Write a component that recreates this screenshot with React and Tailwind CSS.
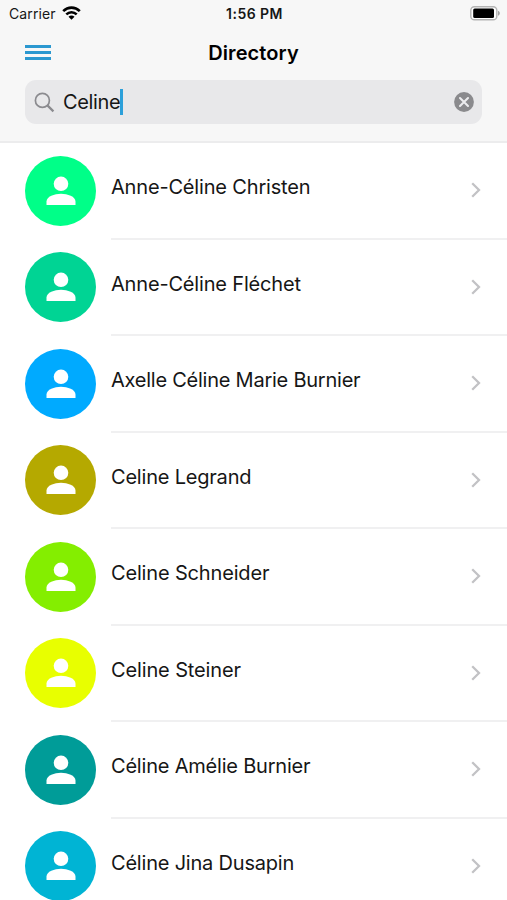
const people = [
  { name: "Anne-Céline Christen", color: "bg-[#00ff88]", tracking: "tracking-[-0.17px]" },
  { name: "Anne-Céline Fléchet", color: "bg-[#00d494]", tracking: "tracking-[-0.17px]" },
  { name: "Axelle Céline Marie Burnier", color: "bg-[#00aaff]", tracking: "tracking-[-0.24px]" },
  { name: "Celine Legrand", color: "bg-[#b5a900]", tracking: "tracking-[-0.2px]" },
  { name: "Celine Schneider", color: "bg-[#84ee00]", tracking: "tracking-[-0.16px]" },
  { name: "Celine Steiner", color: "bg-[#e8ff00]", tracking: "tracking-[-0.13px]" },
  { name: "Céline Amélie Burnier", color: "bg-[#009c98]", tracking: "tracking-[-0.2px]" },
  { name: "Céline Jina Dusapin", color: "bg-[#00b4d4]", tracking: "tracking-[-0.2px]" },
];

function WifiIcon() {
  return (
    <svg className="mb-[2px] h-[14px] w-[19px]" viewBox="0 0 19 14" fill="none" stroke="#000" strokeWidth="2.6">
      <path d="M1.2 5.2C6 .4 13 .4 17.8 5.2" />
      <path d="M4.3 8.4c3-2.9 7.4-2.9 10.4 0" />
      <path d="M9.5 13.7 6.5 10.8c1.7-1.6 4.3-1.6 6 0Z" fill="#000" stroke="none" />
    </svg>
  );
}

function BatteryIcon() {
  return (
    <svg className="h-[15px] w-[31px]" viewBox="0 0 31 15">
      <rect x="1.8" y=".7" width="26" height="13.1" rx="3.6" fill="#fff" stroke="#b4b4b4" strokeWidth="1.4" />
      <rect x="4.2" y="2.6" width="20.8" height="9.4" rx="1.5" fill="#000" />
      <path d="M29 4.8c2.4.8 2.4 4.2 0 5Z" fill="#a3a3a3" />
    </svg>
  );
}

function Person({ color }) {
  return (
    <div className={`flex h-[70px] w-[71px] shrink-0 items-center justify-center rounded-[50%] ${color}`}>
      <svg className="h-[30px] w-[30px]" viewBox="0 0 30 30" fill="#fff">
        <circle cx="15" cy="7.8" r="7.3" />
        <path d="M.5 29v-3.6c0-4.8 8-7.6 14.5-7.6s14.5 2.8 14.5 7.6V29Z" />
      </svg>
    </div>
  );
}

function Row({ name, color, tracking }) {
  return (
    <li className="flex h-[96.5px] shrink-0 pl-[25.3px]">
      <div className="pt-[12.7px]">
        <Person color={color} />
      </div>
      <div className="ml-[14.7px] flex flex-1 justify-between border-b-2 border-[#f0f0f1] pr-[25px]">
        <span className={`whitespace-nowrap pt-[30px] text-[20px] leading-[28px] ${tracking}`}>{name}</span>
        <svg className="mt-[38.4px] h-[18px] w-[12px]" viewBox="0 0 12 18" fill="none" stroke="#c2c2c5" strokeWidth="2.3">
          <path d="m2.2 2.2 6.8 6.8-6.8 6.8" />
        </svg>
      </div>
    </li>
  );
}

export default function App() {
  return (
    <div className="flex h-[900px] w-[507px] flex-col overflow-hidden bg-white font-['Inter','Liberation_Sans',sans-serif] text-[#161616]">
      <header className="h-[143px] shrink-0 border-b-2 border-[#ececed] bg-[#f7f7f7]">
        <div className="grid h-[27px] grid-cols-3 items-center pl-[9px] pr-[7px]">
          <div className="flex items-center gap-[6px]">
            <span className="text-[14px] tracking-[0.1px]">Carrier</span>
            <WifiIcon />
          </div>
          <span className="text-center text-[14px] font-semibold tracking-[0.45px]">1:56 PM</span>
          <div className="flex justify-end">
            <BatteryIcon />
          </div>
        </div>
        <div className="grid h-[53px] grid-cols-[1fr_auto_1fr] items-center px-[25px] pb-[2px]">
          <div className="flex w-[26px] flex-col gap-[3px]">
            <span className="h-[3px] bg-[#2b98d0]" />
            <span className="h-[3px] bg-[#2b98d0]" />
            <span className="h-[3px] bg-[#2b98d0]" />
          </div>
          <h1 className="text-[20px] font-semibold tracking-[0.1px] text-black">Directory</h1>
          <span />
        </div>
        <div className="mx-[25px] flex h-[44px] items-center rounded-[11px] bg-[#e8e8ea] pl-[9px] pr-[8px]">
          <svg className="h-[21px] w-[21px]" viewBox="0 0 21 21" fill="none" stroke="#8b8b8f" strokeWidth="1.7">
            <circle cx="8.4" cy="8.4" r="7" />
            <path d="m13.4 13.4 6 6" strokeWidth="2.2" />
          </svg>
          <span className="ml-[8px] text-[20px] tracking-[-0.35px]">Celine</span>
          <span className="h-[26px] w-[2.5px] bg-[#2ca0da]" />
          <svg className="ml-auto h-[20px] w-[20px]" viewBox="0 0 20 20">
            <circle cx="10" cy="10" r="9.9" fill="#8a8a8d" />
            <path d="m6 6 8 8M14 6l-8 8" stroke="#ececee" strokeWidth="2.1" strokeLinecap="round" />
          </svg>
        </div>
      </header>
      <ul className="flex flex-col">
        {people.map((p) => (
          <Row key={p.name} {...p} />
        ))}
      </ul>
    </div>
  );
}
